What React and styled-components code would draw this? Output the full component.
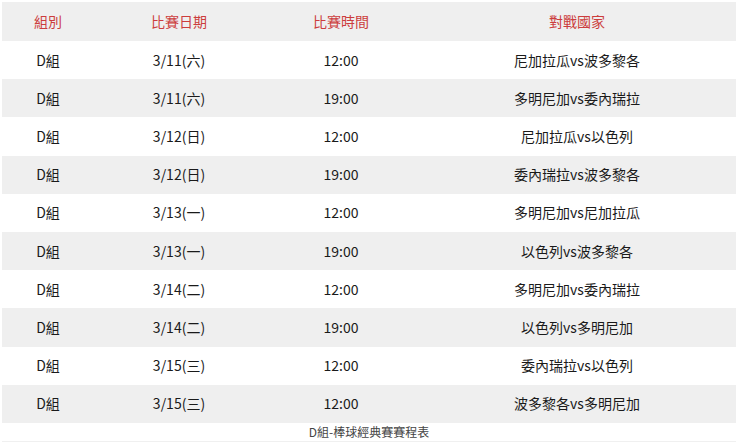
import styled, { createGlobalStyle } from "styled-components";

const GlobalStyle = createGlobalStyle`
  html, body {
    margin: 0;
    padding: 0;
    background: #ffffff;
  }
  body {
    font-family: "Noto Sans CJK TC", "Noto Sans", sans-serif;
  }
`;

const Wrapper = styled.div`
  padding: 2px 4px 0 2px;
`;

const Table = styled.table`
  width: 734px;
  border-collapse: collapse;
  table-layout: fixed;
`;

const Caption = styled.caption`
  caption-side: bottom;
  font-size: 12px;
  line-height: 18px;
  color: #444;
  border-bottom: 1px solid #f0f0f0;
`;

const HeadRow = styled.tr`
  background: #efefef;
  height: 39px;
`;

const Row = styled.tr`
  background: ${(p) => (p.$striped ? "#efefef" : "#ffffff")};
  height: 38.2px;
`;

const Th = styled.th`
  width: ${(p) => p.$w}px;
  font-weight: 400;
  font-size: 14px;
  line-height: 18px;
  color: #cc3d3d;
  text-align: center;
  padding: 0 0 1px;
`;

const Td = styled.td`
  font-size: 14px;
  line-height: 18px;
  color: #1a1a1a;
  text-align: center;
  padding: 0 0 1px;
`;

const columns = [
  { title: "組別", w: 92 },
  { title: "比賽日期", w: 170 },
  { title: "比賽時間", w: 154 },
  { title: "對戰國家", w: 318 },
];

const games = [
  ["D組", "3/11(六)", "12:00", "尼加拉瓜vs波多黎各"],
  ["D組", "3/11(六)", "19:00", "多明尼加vs委內瑞拉"],
  ["D組", "3/12(日)", "12:00", "尼加拉瓜vs以色列"],
  ["D組", "3/12(日)", "19:00", "委內瑞拉vs波多黎各"],
  ["D組", "3/13(一)", "12:00", "多明尼加vs尼加拉瓜"],
  ["D組", "3/13(一)", "19:00", "以色列vs波多黎各"],
  ["D組", "3/14(二)", "12:00", "多明尼加vs委內瑞拉"],
  ["D組", "3/14(二)", "19:00", "以色列vs多明尼加"],
  ["D組", "3/15(三)", "12:00", "委內瑞拉vs以色列"],
  ["D組", "3/15(三)", "12:00", "波多黎各vs多明尼加"],
];

export default function App() {
  return (
    <>
      <GlobalStyle />
      <Wrapper>
        <Table>
          <Caption>D組-棒球經典賽賽程表</Caption>
          <thead>
            <HeadRow>
              {columns.map((c) => (
                <Th key={c.title} $w={c.w}>
                  {c.title}
                </Th>
              ))}
            </HeadRow>
          </thead>
          <tbody>
            {games.map((g, i) => (
              <Row key={i} $striped={i % 2 === 1}>
                {g.map((cell, j) => (
                  <Td key={j}>{cell}</Td>
                ))}
              </Row>
            ))}
          </tbody>
        </Table>
      </Wrapper>
    </>
  );
}
